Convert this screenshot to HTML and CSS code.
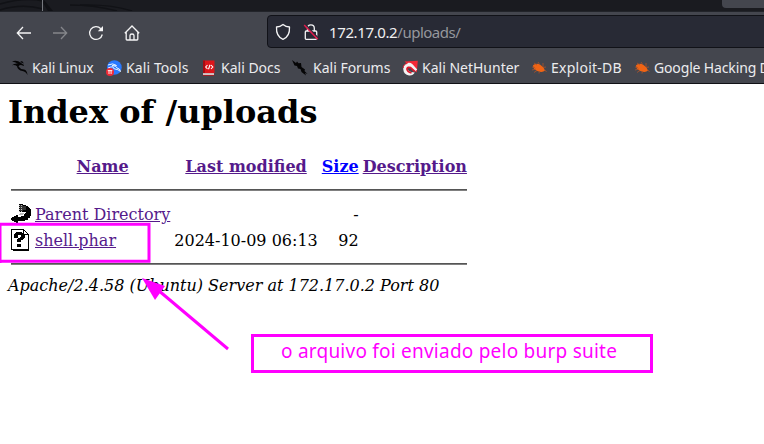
FILE: index.html
```html
<!DOCTYPE html>
<html lang="en">
<head>
<meta charset="utf-8">
<title>Index of /uploads</title>
<link rel="stylesheet" href="styles.css">
</head>
<body>
<header class="browser">
  <div class="tabs">
    <svg class="tab-art" width="240" height="11" viewBox="0 0 240 11"><path d="M0 4Q25-3 43 1M0 10Q22 3 43 9M70 5Q95 5 117 11M80 5Q110 4 132 11" fill="none" stroke="#111216" stroke-width="1.5"/><path d="M44 0L53 11H48L43 3Z" fill="#101115"/><path d="M42.5 0V11" stroke="#777a80"/></svg>
    <div class="tab"></div>
  </div>
  <div class="toolbar">
    <nav class="nav">
      <svg width="16" height="16" viewBox="0 0 16 16"><path d="M15 8H1.5M7 2L1.3 8L7 14" fill="none" stroke="#f4f4f5" stroke-width="1.3"/></svg>
      <svg width="16" height="16" viewBox="0 0 16 16"><path d="M1 8H14.5M9 2L14.7 8L9 14" fill="none" stroke="#85868b" stroke-width="1.3"/></svg>
      <svg width="16" height="16" viewBox="0 0 16 16"><path d="M14.3 9.5A6.4 6.4 0 1 1 12.8 3.7" fill="none" stroke="#f4f4f5" stroke-width="1.3"/><path d="M15 1V6.2H9.8Z" fill="#f4f4f5"/></svg>
      <svg width="16" height="16" viewBox="0 0 16 16"><path d="M.8 8.2L8 1L15.2 8.2M2.2 7V14.2Q2.2 15 3 15H13Q13.8 15 13.8 14.2V7M6 15V10.5Q6 9 8 9T10 10.5V15" fill="none" stroke="#f4f4f5" stroke-width="1.3"/></svg>
    </nav>
    <div class="urlbar">
      <svg width="16" height="18" viewBox="0 0 16 18"><path d="M8 1.4C6 3 3.7 3.8 1.5 4C1.2 9.5 3.2 14.4 8 16.4C12.8 14.4 14.8 9.5 14.5 4C12.3 3.8 10 3 8 1.4Z" fill="none" stroke="#f4f4f5" stroke-width="1.3" stroke-linejoin="round"/></svg>
      <svg width="16" height="18" viewBox="0 0 16 18"><path d="M4.5 8V5.2A3.4 3.4 0 0 1 11.3 5.2V8M3.2 8H12.7Q13.7 8 13.7 9V15.5Q13.7 16.3 12.7 16.3H3.2Q2.3 16.3 2.3 15.5V9Q2.3 8 3.2 8Z" fill="none" stroke="#f4f4f5" stroke-width="1.3"/><path d="M2.8 2L15 14.8" stroke="#282a35" stroke-width="1.5"/><path d="M1.2 2L14.7 16.2" stroke="#e21b4d" stroke-width="1.5"/></svg>
      <span class="url">172.17.0.2<span class="path">/uploads/</span></span>
    </div>
  </div>
  <div class="bookmarks">
    <a class="bm linux"><svg width="16" height="16" viewBox="0 0 16 16"><path d="M0 1.5Q5-.3 9 3L12 5L11.5 6Q8 4 6.5 6.5Q8 9 12 9.5Q15 10 15.5 15Q13.8 11.5 10.5 11Q5.5 10 5 6.2Q3 4.5 0 5.2Q3 3 6 3.7Q3 1.7 0 1.5ZM8 2L10 1L12 3.5Z" fill="#050506"/></svg><span>Kali Linux</span></a>
    <a class="bm tools"><svg width="16" height="16" viewBox="0 0 16 16"><circle cx="8.4" cy="7.5" r="7.3" fill="#2979ff"/><path d="M2 5Q7 2.5 10.5 5.5Q8 4.7 6 5.5Q11 6 11 8Q14 8.3 14.5 11.5Q12 9.2 9 9Q7 8.8 7 6.8Q5 6.6 2 8" fill="none" stroke="#e8f3ff"/><circle cx="4" cy="12" r="4" fill="#f12a36"/><path d="M1.8 10.6H6.3M3 10.6V14M5.1 10.6V14" stroke="#fff" stroke-width=".9"/></svg><span>Kali Tools</span></a>
    <a class="bm docs"><svg width="16" height="16" viewBox="0 0 16 16"><path d="M2 .5H13.5V13.3H2Z" fill="#dc161b"/><path d="M2 .5H4V13H2Z" fill="#a60c12"/><path d="M2 13.3H13V15.3H2Z" fill="#eee"/><path d="M2 15.3H13" stroke="#a60c12"/><path d="M6.5 5L4.7 7L6.5 9M10 5L11.8 7L10 9M9 4.8L7.5 9.2" fill="none" stroke="#fff" stroke-width="1.1"/></svg><span>Kali Docs</span></a>
    <a class="bm forums"><svg width="16" height="16" viewBox="0 0 16 16"><path d="M0 0L4 3L5 1.5L6.5 3.3L9 3L9.5 7L13 9.5L12.5 11L15.5 14L13 13L14 15.5L9.5 12L8.5 9L6 8.5L5 6L2.5 5.5Z" fill="#050506"/></svg><span>Kali Forums</span></a>
    <a class="bm hunter"><svg width="16" height="16" viewBox="0 0 16 16"><path d="M2.5 1.5L15.8 .8L14.8 12.5Z" fill="#f32936"/><path d="M1.3 9.5A5.7 5.7 0 0 1 10.5 4.2L15.2 9.5L13 11.5L8.5 7.5Q6 6.6 5.7 9Q6 11 9 12L12.8 12.5Q11 15.8 7 15.4Q1.7 14.5 1.3 9.5Z" fill="#f3f3f3"/><path d="M12.8 11.5L8.7 7.7Q5.6 6.5 5 9Q5.2 11.8 9.5 13" fill="none" stroke="#df172b" stroke-width="1.8"/><path d="M1.2 8Q1 4.5 5.5 3.3" fill="none" stroke="#df172b"/></svg><span>Kali NetHunter</span></a>
    <a class="bm exploit"><svg width="16" height="16" viewBox="0 0 16 16"><path d="M2 5.2Q7 2.2 10.5 5.8Q13 7.2 14 10.5Q11.5 13 7 11.2Q3 10 2.3 7.3Z" fill="#f06414"/><path d="M3 3L6 5M7 2L9 5M12 3V7M1 7L4 7.5M1 10L5 9M3 12.5L6 10.5M8 13.5L8.5 11M12 7.5L15 7M14 10L15.5 12" stroke="#a9532b" stroke-width=".8"/></svg><span>Exploit-DB</span></a>
    <a class="bm google"><svg width="16" height="16" viewBox="0 0 16 16"><path d="M2 5.2Q7 2.2 10.5 5.8Q13 7.2 14 10.5Q11.5 13 7 11.2Q3 10 2.3 7.3Z" fill="#f06414"/><path d="M3 3L6 5M7 2L9 5M12 3V7M1 7L4 7.5M1 10L5 9M3 12.5L6 10.5M8 13.5L8.5 11M12 7.5L15 7M14 10L15.5 12" stroke="#a9532b" stroke-width=".8"/></svg><span>Google Hacking DB</span></a>
  </div>
</header>
<main>
  <h1>Index of /uploads</h1>
  <table>
    <tr class="head"><th class="icon"></th><th><a href="#name">Name</a></th><th><a href="#date">Last modified</a></th><th><a class="new" href="#size">Size</a></th><th><a href="#description">Description</a></th></tr>
    <tr class="rule"><td colspan="5"><hr></td></tr>
    <tr class="entry"><td class="icon"><svg width="20" height="22" viewBox="0 0 20 22" shape-rendering="crispEdges"><path d="M8 1H12V2H15V3H17V4H18V5H19V6H20V13H19V15H17V17H14V18H7V20H5V19H3V18H1V17H0V15H1V14H3V13H5V12H7V14H10V13H13V11H14V10H15V9H8Z" fill="#000"/><path d="M9 2H12V3H15V7H12V8H9Z" fill="#333"/><path d="M8.5 2V9M10.5 2V9" stroke="#bbb" stroke-dasharray="1 1"/><path d="M9 10H13V11H12V12H8V11H9Z" fill="#bbb"/></svg></td><td><a href="#parent">Parent Directory</a></td><td></td><td class="num">-</td><td></td></tr>
    <tr class="entry"><td class="icon"><svg width="20" height="22" viewBox="0 0 20 22" shape-rendering="crispEdges"><path d="M.5 .5H12.5L17.5 5.5V20.5H.5Z" fill="#fff" stroke="#000"/><path d="M12.5 .5V5.5H17M2 21.5H17.5" fill="none" stroke="#000"/><path d="M3 5H4V4H5V3H11V4H13V5H14V9H13V10H12V11H10V13H6V10H7V9H9V8H10V6H7V9H3ZM6 15H10V18H6Z" fill="#000"/></svg></td><td><a href="#shell">shell.phar</a></td><td class="num">2024-10-09 06:13</td><td class="num">92</td><td></td></tr>
    <tr class="rule last"><td colspan="5"><hr></td></tr>
  </table>
  <address>Apache/2.4.58 (Ubuntu) Server at 172.17.0.2 Port 80</address>
</main>
<svg class="notes" width="764" height="444" viewBox="0 0 764 444"><g fill="none" stroke="#f0f" stroke-width="3"><path d="M-1 224.3H149V261.3H-1Z"/><path d="M0 223V263"/><path d="M228 349L158 290"/></g><path d="M142 278L165 286L155 300Z" fill="#f0f"/></svg>
<div class="note"><span>o arquivo foi enviado pelo burp suite</span></div>
</body>
</html>
```
FILE: styles.css
```css
* { box-sizing: border-box; }
body { margin: 0; width: 764px; height: 444px; overflow: hidden; position: relative; background: #fff; color: #000; font: 16px/19px "DejaVu Serif", serif; }
svg { display: block; flex: none; }
a { color: #551a8b; }
.browser { height: 84px; background: #44464e; border-bottom: 1px solid #101116; font-family: "Noto Sans", sans-serif; color: #f0f0f1; }
.tabs { height: 12px; background: #1a1b20; border-bottom: 1px solid #22242a; display: flex; justify-content: space-between; }
.tab { width: 42px; height: 8px; background: #44464e; border-radius: 0 0 0 4px; }
.toolbar { height: 41px; display: flex; overflow: hidden; }
.nav { width: 267px; flex: none; padding: 13px 0 0 16px; display: flex; gap: 20px; }
.urlbar { width: 510px; height: 33px; margin-top: 3px; flex: none; background: #282a35; border: 1px solid #111218; border-radius: 4px; display: flex; align-items: center; padding: 1px 0 0 7px; gap: 12px; }
.url { font-size: 15px; white-space: nowrap; margin-left: -2px; padding-top: 1px; letter-spacing: -.38px; }
.path { color: #96979d; letter-spacing: -.5px; }
.bookmarks { display: flex; height: 29px; align-items: center; padding-left: 12px; white-space: nowrap; overflow: hidden; font-size: 14px; }
.bm { display: flex; gap: 4px; flex: none; height: 20px; align-items: center; color: #ececee; }
.linux { width: 94px; letter-spacing: -.15px; }
.tools { width: 95px; letter-spacing: .1px; }
.docs { width: 91px; }
.forums { width: 110px; gap: 5px; }
.hunter { width: 129px; }
.exploit { width: 103px; letter-spacing: .25px; }
.google { letter-spacing: -.15px; }
main { padding: 9px 8px 0; }
h1 { margin: 0 0 21px; font-size: 32px; line-height: 38px; font-weight: bold; }
table { border-spacing: 2px; border-collapse: separate; }
td, th { padding: 1px; white-space: nowrap; }
td { height: 24px; vertical-align: top; }
.head th { height: 24px; vertical-align: middle; }
.icon { width: 22px; }
.rule td { height: 20px; }
.rule.last td { height: 19px; }
.entry td { line-height: 22px; padding: 2px 1px 0; }
.entry svg { margin-top: -1px; }
hr { margin: 8px 0; height: 2px; border: 0; background: #808080; border-top: 1px solid #555; }
.last hr { margin-bottom: 7px; }
.new { color: #00f; }
.num { text-align: right; }
address { font-style: italic; padding-top: 1px; }
.notes { position: absolute; left: 0; top: 0; }
.note { position: absolute; left: 251px; top: 334px; width: 402px; height: 39px; border: 3px solid #f0f; color: #f0f; font: 19px/28px "Noto Sans", sans-serif; letter-spacing: .23px; padding-left: 27px; white-space: nowrap; }
```
